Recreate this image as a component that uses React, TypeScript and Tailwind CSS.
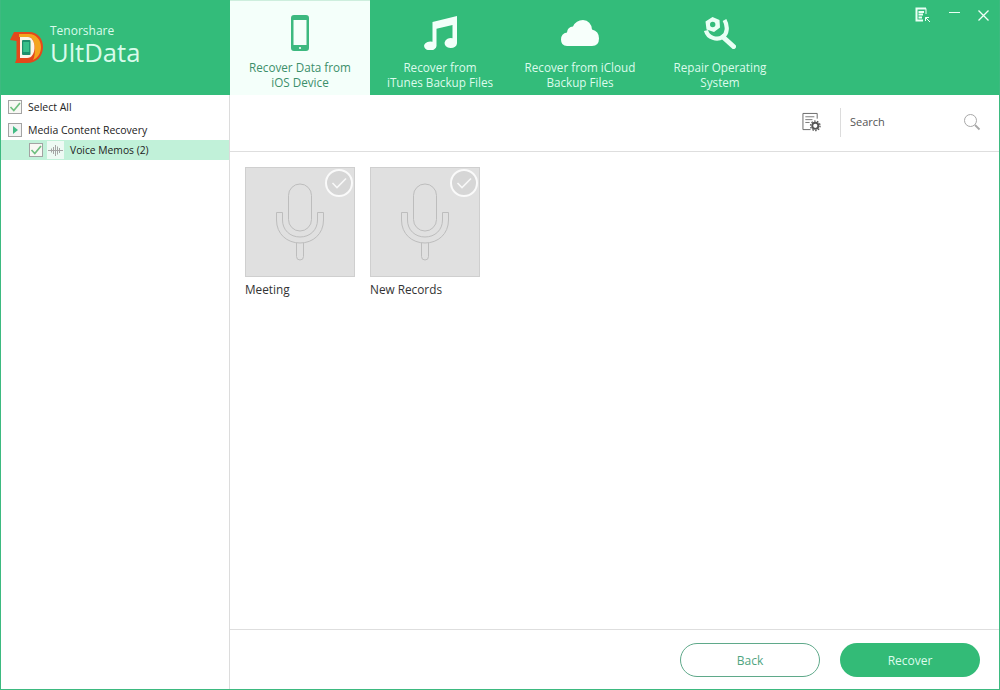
import React from "react";

const Check = ({ className = "" }: { className?: string }) => (
  <span className={`flex h-[14px] w-[14px] shrink-0 items-center justify-center border border-[#a3a3a3] bg-[#f8f8f4] ${className}`}>
    <svg width="12" height="12" viewBox="0 0 12 12" fill="none">
      <path d="M1.5 6 L4.8 9.5 L11 2" stroke="#6fbf7f" strokeWidth="1.7" />
    </svg>
  </span>
);

const Mic = () => (
  <svg width="108" height="108" viewBox="0 0 108 108" fill="none" stroke="#bdbdbd" strokeWidth="1">
    <rect x="42.5" y="16" width="23" height="47" rx="11.5" />
    <path d="M30.5 44.5 H36.5 V52 C36.5 62 44 69 54 69 C64 69 71.5 62 71.5 52 V44.5 H77.5 V52 C77.5 66 67 75 54 75 C41 75 30.5 66 30.5 52 Z" />
    <path d="M50.5 75 V88.5 Q50.5 92 54 92 Q57.5 92 57.5 88.5 V75" />
  </svg>
);

const Card = ({ label }: { label: string }) => (
  <div className="w-[110px]">
    <div className="relative h-[110px] w-[110px] border border-[#cfcfcf] bg-[#e0e0e0]">
      <Mic />
      <span className="absolute right-[1px] top-[1px] flex h-[28px] w-[28px] items-center justify-center rounded-full border-2 border-[#fafafa] bg-[#d6d6d6]">
        <svg width="18" height="14" viewBox="0 0 18 14" fill="none">
          <path d="M2.5 7 L7 11.5 L16 2.5" stroke="#f8f8f8" strokeWidth="1.6" />
        </svg>
      </span>
    </div>
    <div className="mt-[4px] text-[11.8px] leading-[16px] text-[#333]">{label}</div>
  </div>
);

const Tab = ({ icon, lines, active }: { icon: React.ReactNode; lines: string[]; active?: boolean }) => (
  <div
    className={`flex h-[95px] w-[140px] flex-col items-center text-center text-[11.7px] leading-[15px] ${
      active ? "border-t border-[#cdeedd] bg-[#f4fffa] text-[#3c8f6a]" : "pt-px text-[#dcfbec]"
    }`}
  >
    <div className="flex h-[59px] items-center justify-center pt-[4px]">{icon}</div>
    <div>
      {lines.map((l) => (
        <div key={l} className="whitespace-nowrap">{l}</div>
      ))}
    </div>
  </div>
);

const Phone = () => (
  <svg width="18" height="36" viewBox="0 0 18 36">
    <path fillRule="evenodd" fill="#3cb97f" d="M3 0 H15 Q18 0 18 3 V33 Q18 36 15 36 H3 Q0 36 0 33 V3 Q0 0 3 0 Z M2.5 5 V30 H15.5 V5 Z" />
    <circle cx="9" cy="33" r="1.1" fill="#f4fffa" />
  </svg>
);

const Note = () => (
  <svg width="33" height="34" viewBox="0 0 33 34" fill="#f2fff9">
    <path d="M8.5 6 L33 0 V27 A6.2 5 0 1 1 28.5 22.3 V9 L12.5 12.7 V30 A6.2 4.5 0 1 1 8.5 25.7 Z" />
  </svg>
);

const Cloud = () => (
  <svg width="38" height="26" viewBox="0 0 38 26" fill="#f7fffb">
    <path d="M6 26 Q0 26 0 19.5 Q0 13.5 6 12.5 Q6.5 7 12 6.5 Q15 0 22 0 Q30 0.5 31 9.5 Q38 11 38 18.5 Q38 26 31 26 Z" />
  </svg>
);

const Wrench = () => (
  <svg width="32" height="32" viewBox="0 0 32 32" fill="none">
    <path
      fillRule="evenodd"
      fill="#e9fff4"
      d="M8.5 0 L15.5 3 L16 10.5 L10 15 L2.5 12.5 L1.5 4.5 Z M8.7 4.8 A2.7 2.7 0 1 0 8.71 10.2 A2.7 2.7 0 1 0 8.7 4.8 Z"
    />
    <path d="M2 13.5 C4 21 13 23.5 18.5 20 C23.5 17 24 9 20.5 3" stroke="#e9fff4" strokeWidth="4.2" />
    <path d="M19 20 L29.5 29.5" stroke="#e9fff4" strokeWidth="5" strokeLinecap="round" />
  </svg>
);

const Logo = () => (
  <svg width="33" height="33" viewBox="0 0 33 33">
    <path d="M4 1 H19 C28 1 33 8 33 16 C33 25 27 32 17 32 H5 L6.5 28 V10 L0 9 Z" fill="#e4481b" />
    <path d="M9 3 H19 C26 3 31 9 31 16 C31 22 28 27 23 29 C26 24 26 9 20 6 H9 Z" fill="#f4a51e" />
    <path d="M10 6 H18 C22 6 24.5 11 24.5 16.5 C24.5 22 22 27 17 27 H10 Z" fill="#fdf6e8" />
    <rect x="12" y="9" width="8.5" height="15" rx="1" fill="#1f8f6c" />
    <rect x="13.2" y="11" width="6" height="10" fill="#39c08a" />
  </svg>
);

export default function App() {
  return (
    <div
      className="flex h-[690px] w-[1000px] flex-col overflow-hidden border-x border-b border-[#3dba80] bg-white"
      style={{ fontFamily: '"Open Sans", "Noto Sans", sans-serif' }}
    >
      <header className="relative -mx-px flex h-[95px] shrink-0 bg-[#33bc7a]">
        <div className="flex w-[230px] items-start pl-[10px] pt-[31px]">
          <Logo />
          <div className="-mt-[8px] ml-[7px] text-[#d9fbeb]">
            <div className="h-[15px] text-[12px] leading-[15px]">Tenorshare</div>
            <div className="mt-[2px] h-[26px] text-[25.6px] leading-[26px]">UltData</div>
          </div>
        </div>
        <Tab active icon={<Phone />} lines={["Recover Data from", "iOS Device"]} />
        <Tab icon={<Note />} lines={["Recover from", "iTunes Backup Files"]} />
        <Tab icon={<Cloud />} lines={["Recover from iCloud", "Backup Files"]} />
        <Tab icon={<Wrench />} lines={["Repair Operating", "System"]} />
        <div className="absolute right-[11px] top-[7px] flex items-start gap-[18px]">
          <svg className="-ml-[1px]" width="16" height="16" viewBox="0 0 16 16" fill="none" stroke="#eafff5">
            <path d="M11 1.5 H1.5 V13.5 H8 M3.5 5 H9 M3.5 7.5 H8 M3.5 10.5 H7" strokeWidth="2" />
            <path d="M11 1.5 V7 M15 15 L10.5 10.5 M10.5 14 V10.5 H14" strokeWidth="1" />
          </svg>
          <svg className="mt-[5px]" width="11" height="2" viewBox="0 0 11 2"><rect width="11" height="1" fill="#eafff5" /></svg>
          <svg width="11" height="11" className="mt-[3px]" viewBox="0 0 11 11" stroke="#f2fff9" strokeWidth="1.3">
            <path d="M0.5 0.5 L10.5 10.5 M10.5 0.5 L0.5 10.5" />
          </svg>
        </div>
      </header>

      <div className="flex min-h-0 flex-1">
        <aside className="w-[229px] shrink-0 border-r border-[#dcdcdc] text-[10.5px] text-[#222]">
          <div className="flex h-[24px] items-center gap-[6px] pl-[7px]">
            <Check />
            <span className="pt-[2px]">Select All</span>
          </div>
          <div className="flex h-[21px] items-center gap-[6px] pl-[7px] pt-px">
            <span className="flex h-[14px] w-[14px] shrink-0 items-center justify-center border border-[#a3a3a3] bg-[#f3f3f3]">
              <span className="h-0 w-0 border-y-[4px] border-l-[5px] border-y-transparent border-l-[#43bb85]" />
            </span>
            <span className="pt-[2px]">Media Content Recovery</span>
          </div>
          <div className="flex h-[20px] items-center bg-[#c1f1d9] pl-[28px]">
            <Check />
            <span className="ml-[4px] flex h-[18px] w-[17px] items-center justify-center bg-[#eefaf4]">
              <svg width="15" height="11" viewBox="0 0 15 11" stroke="#a5a5a5" strokeWidth="1">
                <path d="M0 5.5 H15 M3.5 3.5 V7.5 M5.5 2 V9 M7.5 0 V11 M9.5 1.5 V9.5 M11.5 3 V8" />
              </svg>
            </span>
            <span className="ml-[6px] pt-[2px] text-[10.3px]">Voice Memos (2)</span>
          </div>
        </aside>

        <main className="flex min-w-0 flex-1 flex-col">
          <div className="flex h-[57px] shrink-0 items-center justify-end border-b border-[#dedede] pb-[2px]">
            <svg className="mr-[19px]" width="19" height="20" viewBox="0 0 20 20" fill="none">
              <path d="M16 6.5 V1 H1 V18 H9" stroke="#666" strokeWidth="1" />
              <path d="M3.5 4.5 H13 M3.5 7.5 H11 M3.5 10.5 H8" stroke="#777" strokeWidth="1" />
              <circle cx="14" cy="14" r="3.2" fill="none" stroke="#555" strokeWidth="2" />
              <circle cx="14" cy="14" r="5" fill="none" stroke="#555" strokeWidth="1.4" strokeDasharray="1.6 1.5" />
            </svg>
            <div className="h-[29px] w-px bg-[#dcdcdc]" />
            <span className="ml-[9px] w-[113px] text-[11px] text-[#555]">Search</span>
            <svg className="mr-[18px]" width="18" height="18" viewBox="0 0 18 18" fill="none" stroke="#a8a8a8">
              <circle cx="7.5" cy="7.5" r="6" strokeWidth="1" />
              <path d="M12 12 L16.5 16.5" strokeWidth="1.8" />
            </svg>
          </div>
          <div className="flex flex-1 items-start gap-[15px] pl-[15px] pt-[15px]">
            <Card label="Meeting" />
            <Card label="New Records" />
          </div>
          <div className="flex h-[60px] shrink-0 items-start justify-end gap-[20px] border-t border-[#dedede] pr-[19px] pt-[13px]">
            <button className="h-[34px] w-[140px] rounded-full border border-[#5fa98a] bg-white pt-[2px] text-[12px] text-[#4fa57f]">Back</button>
            <button className="h-[34px] w-[140px] rounded-full bg-[#33bb77] pt-[2px] text-[12px] text-[#dcfbec]">Recover</button>
          </div>
        </main>
      </div>
    </div>
  );
}
